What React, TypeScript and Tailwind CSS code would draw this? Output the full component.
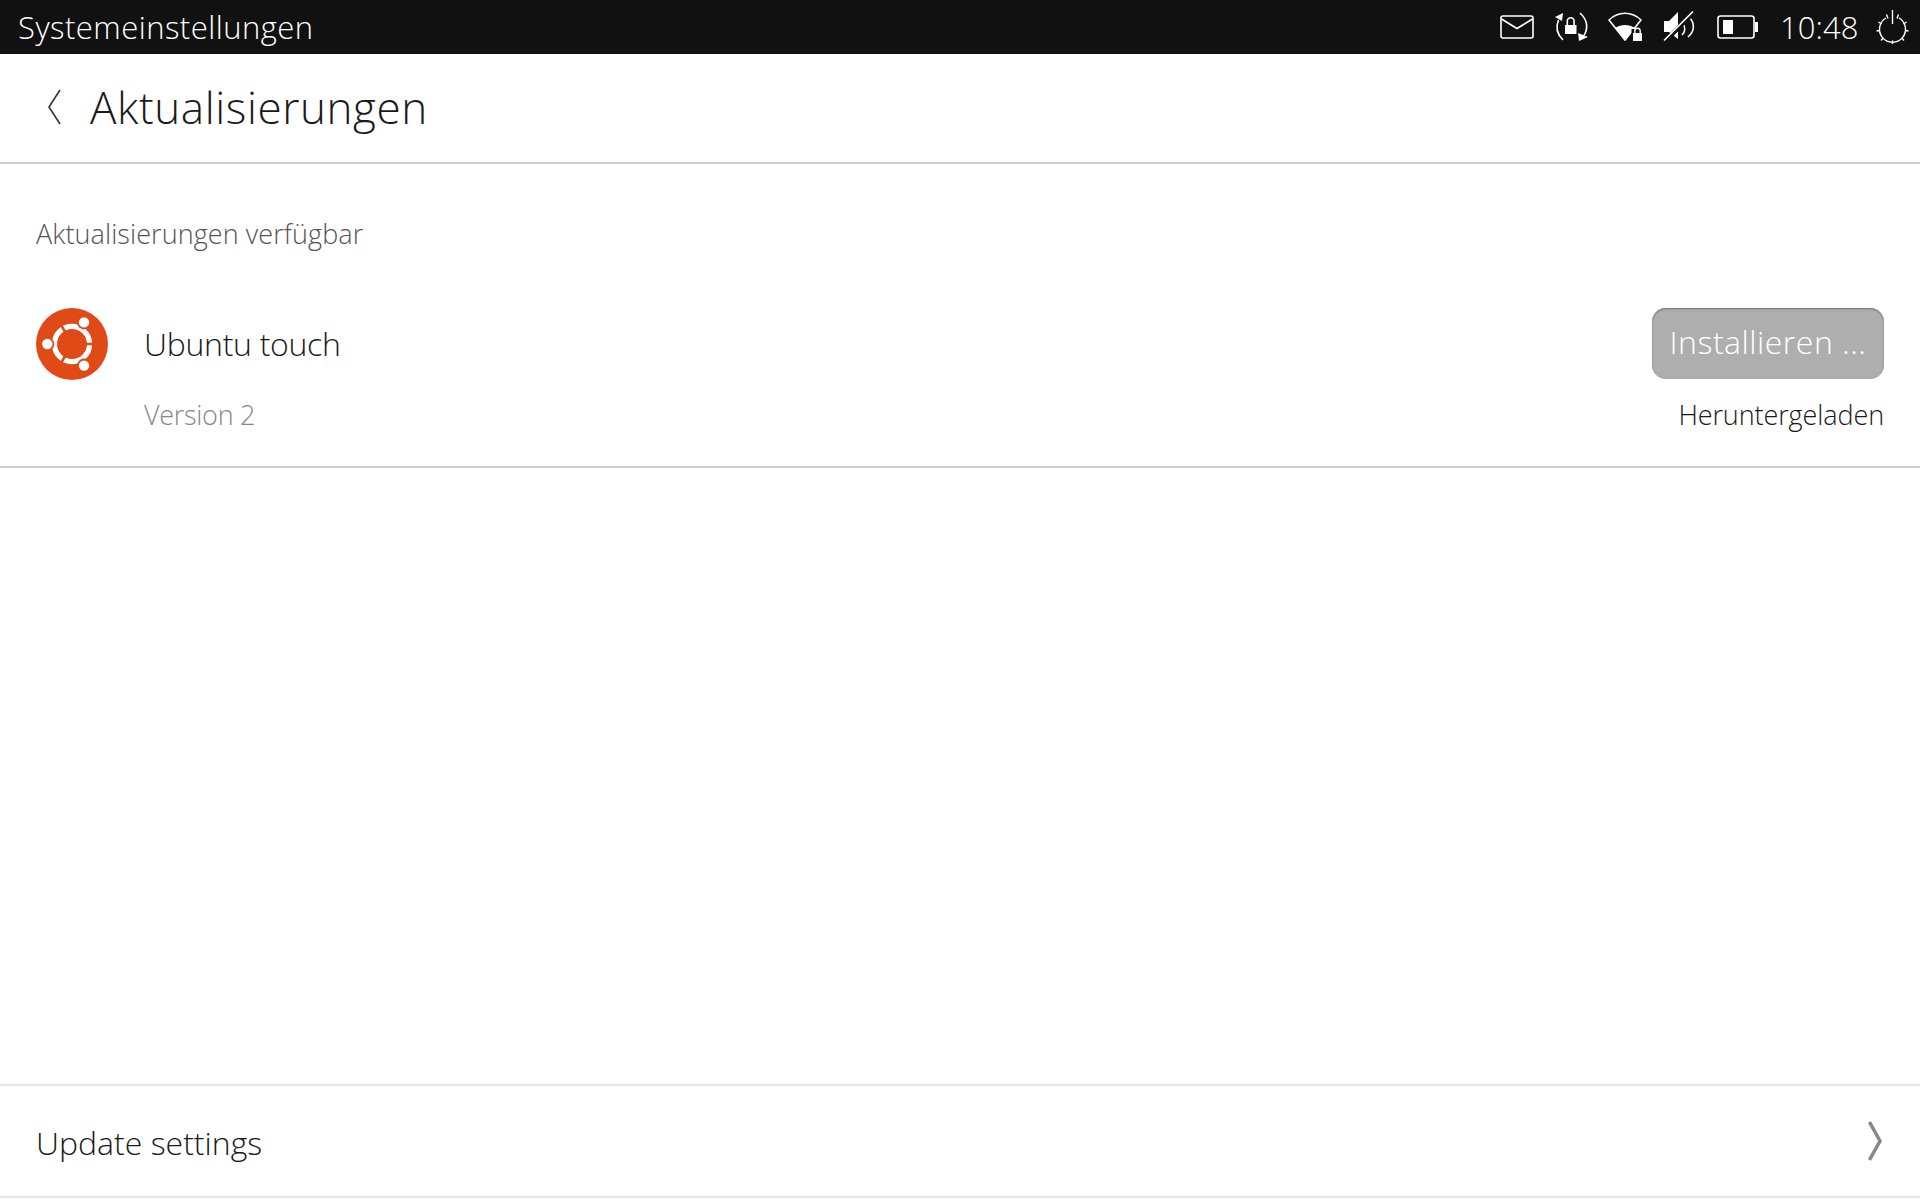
const font = "font-['Open_Sans',sans-serif]";

function MailIcon() {
  return (
    <svg width="34" height="24" viewBox="0 0 34 24" fill="none" stroke="#fff" strokeWidth="1.6">
      <rect x="1" y="1" width="32" height="22" rx="2" />
      <path d="M1.5 4 L17 13.5 L32.5 4" />
    </svg>
  );
}

function RotationLockIcon() {
  return (
    <svg className="overflow-visible" width="32" height="28" viewBox="0 0 32 28" fill="none">
      <path d="M3.5 7 C0.5 14 2 21 8 27" stroke="#fff" strokeWidth="1.6" />
      <path d="M25 0 C33 7 34 17 27 25" stroke="#fff" strokeWidth="1.6" />
      <path d="M0 4 L8 0 L7 8 Z" fill="#fff" />
      <path d="M23 20 L33 24 L24 28 Z" fill="#fff" />
      <rect x="10" y="12" width="11.5" height="9" fill="#fff" />
      <path d="M12.3 12 V8.2 a3.4 3.4 0 0 1 6.8 0 V12" stroke="#fff" strokeWidth="1.6" />
    </svg>
  );
}

function WifiIcon() {
  return (
    <svg width="34" height="30" viewBox="0 0 34 30" fill="none">
      <path d="M1 8 C10 -1 24 -1 33 8 L17 28 Z" stroke="#fff" strokeWidth="1.6" strokeLinejoin="round" />
      <path d="M7 16 C13 12 21 12 27 16 L17 29 Z" fill="#fff" />
      <rect x="23.5" y="17" width="10.5" height="13" fill="#111111" />
      <rect x="25" y="21" width="9" height="8" fill="#fff" />
      <path d="M26.8 21.5 V19 a2.7 2.7 0 0 1 5.4 0 V21.5" stroke="#fff" strokeWidth="1.4" />
    </svg>
  );
}

function MuteIcon() {
  return (
    <svg width="33" height="32" viewBox="0 0 33 32" fill="none">
      <path d="M1 10 H6 L15 1 V28 L6 21 H1 Z" fill="#fff" />
      <path d="M20 13 C22.5 16 22.5 21 19 24" stroke="#fff" strokeWidth="1.6" />
      <path d="M26 6 C32 12 32 20 25 26" stroke="#fff" strokeWidth="1.6" />
      <path d="M2.5 30 L31 1" stroke="#111111" strokeWidth="4.5" />
      <path d="M1 29.5 L30 0.5" stroke="#fff" strokeWidth="1.6" />
    </svg>
  );
}

function BatteryIcon() {
  return (
    <svg width="42" height="24" viewBox="0 0 42 24" fill="none">
      <rect x="1" y="1" width="36" height="22" rx="2.5" stroke="#fff" strokeWidth="1.6" />
      <rect x="6" y="5" width="10" height="14" fill="#fff" />
      <path d="M38 7 H41 V17 H38 Z" fill="#fff" />
    </svg>
  );
}

function PowerIcon() {
  return (
    <svg width="33" height="34" viewBox="0 0 33 34" fill="none" stroke="#fff" strokeWidth="1.4">
      <path d="M16.5 0 V14" />
      <path d="M10 8 A13 13 0 1 0 23 8" />
      <path d="M10.5 4.5 L12 8.5 M22.5 4.5 L21 8.5 M2.5 12 L5.5 14 M30.5 12 L27.5 14 M0.5 21 L3.7 20.5 M32.5 21 L29.3 20.5 M5 30.5 L7.2 28 M28 30.5 L25.8 28 M16.5 30.5 V34" />
    </svg>
  );
}

function UbuntuLogo() {
  return (
    <svg width="72" height="72" viewBox="0 0 72 72">
      <circle cx="36" cy="36" r="36" fill="#e04a17" />
      <circle cx="36" cy="36" r="17.5" fill="none" stroke="#fff" strokeWidth="5.5" />
      <path d="M36 36 L60 36 M36 36 L24 56.8 M36 36 L24 15.2" stroke="#e04a17" strokeWidth="2.6" />
      <circle cx="36" cy="36" r="14.8" fill="#e04a17" />
      <circle cx="11.3" cy="36" r="7" fill="#e04a17" />
      <circle cx="48" cy="14.4" r="7" fill="#e04a17" />
      <circle cx="48" cy="57.6" r="7" fill="#e04a17" />
      <circle cx="11.3" cy="36" r="5.2" fill="#fff" />
      <circle cx="48" cy="14.4" r="5.2" fill="#fff" />
      <circle cx="48" cy="57.6" r="5.2" fill="#fff" />
    </svg>
  );
}

export default function App() {
  return (
    <div className={`${font} flex h-[1200px] w-[1920px] flex-col overflow-hidden bg-white`}>
      <div className="flex h-[54px] shrink-0 items-center justify-between bg-[#111111] pl-[18px] pr-[11px]">
        <span className="text-[31px] font-light tracking-[0.47px] text-white">Systemeinstellungen</span>
        <div className="flex items-center gap-[21px]">
          <MailIcon />
          <RotationLockIcon />
          <WifiIcon />
          <MuteIcon />
          <BatteryIcon />
          <span className="w-[75px] whitespace-nowrap text-[31px] font-light tracking-[0.1px] text-white">10:48</span>
          <PowerIcon />
        </div>
      </div>

      <div className="flex h-[110px] shrink-0 items-center border-b-2 border-[#cdcdcd] pb-[2px] pl-[47px]">
        <svg width="14" height="36" viewBox="0 0 14 36" fill="none" stroke="#333" strokeWidth="1.6">
          <path d="M13 1 L2 18 L13 35" />
        </svg>
        <h1 className="ml-[29px] text-[44px] font-light tracking-[0.6px] text-[#1a1a1a]">Aktualisierungen</h1>
      </div>

      <div className="flex h-[304px] shrink-0 flex-col border-b-2 border-[#cdcdcd] px-[36px]">
        <p className="mt-[52px] text-[27px] font-light leading-[36px] tracking-[0.08px] text-[#555555]">Aktualisierungen verfügbar</p>
        <div className="mt-[56px] flex justify-between">
          <div className="flex">
            <UbuntuLogo />
            <div className="ml-[36px] flex flex-col">
              <span className="mt-[16px] text-[32px] font-light leading-[40px] tracking-[-0.3px] text-[#1a1a1a]">Ubuntu touch</span>
              <span className="mt-[33px] text-[27px] font-light leading-[36px] tracking-[-0.3px] text-[#888888]">Version 2</span>
            </div>
          </div>
          <div className="flex flex-col items-end">
            <button className="h-[71px] w-[232px] rounded-[14px] bg-[#aeaeae] pb-[4px] text-[32px] font-light tracking-[0.5px] text-white shadow-[inset_0_1px_2px_#6f6f6f]">
              Installieren ...
            </button>
            <span className="mt-[18px] text-[27px] font-light leading-[36px] tracking-[-0.1px] text-[#1a1a1a]">Heruntergeladen</span>
          </div>
        </div>
      </div>

      <div className="flex-1" />

      <div className="mb-[2px] flex h-[114px] shrink-0 items-center justify-between border-y-2 border-[#e5e5e5] pl-[36px] pr-[38px] pt-[4px]">
        <span className="text-[32px] font-light text-[#1a1a1a]">Update settings</span>
        <svg className="-mt-[4px]" width="14" height="40" viewBox="0 0 14 40" fill="none" stroke="#888888" strokeWidth="3.5">
          <path d="M1.5 1 L12 20 L1.5 39" />
        </svg>
      </div>
    </div>
  );
}
